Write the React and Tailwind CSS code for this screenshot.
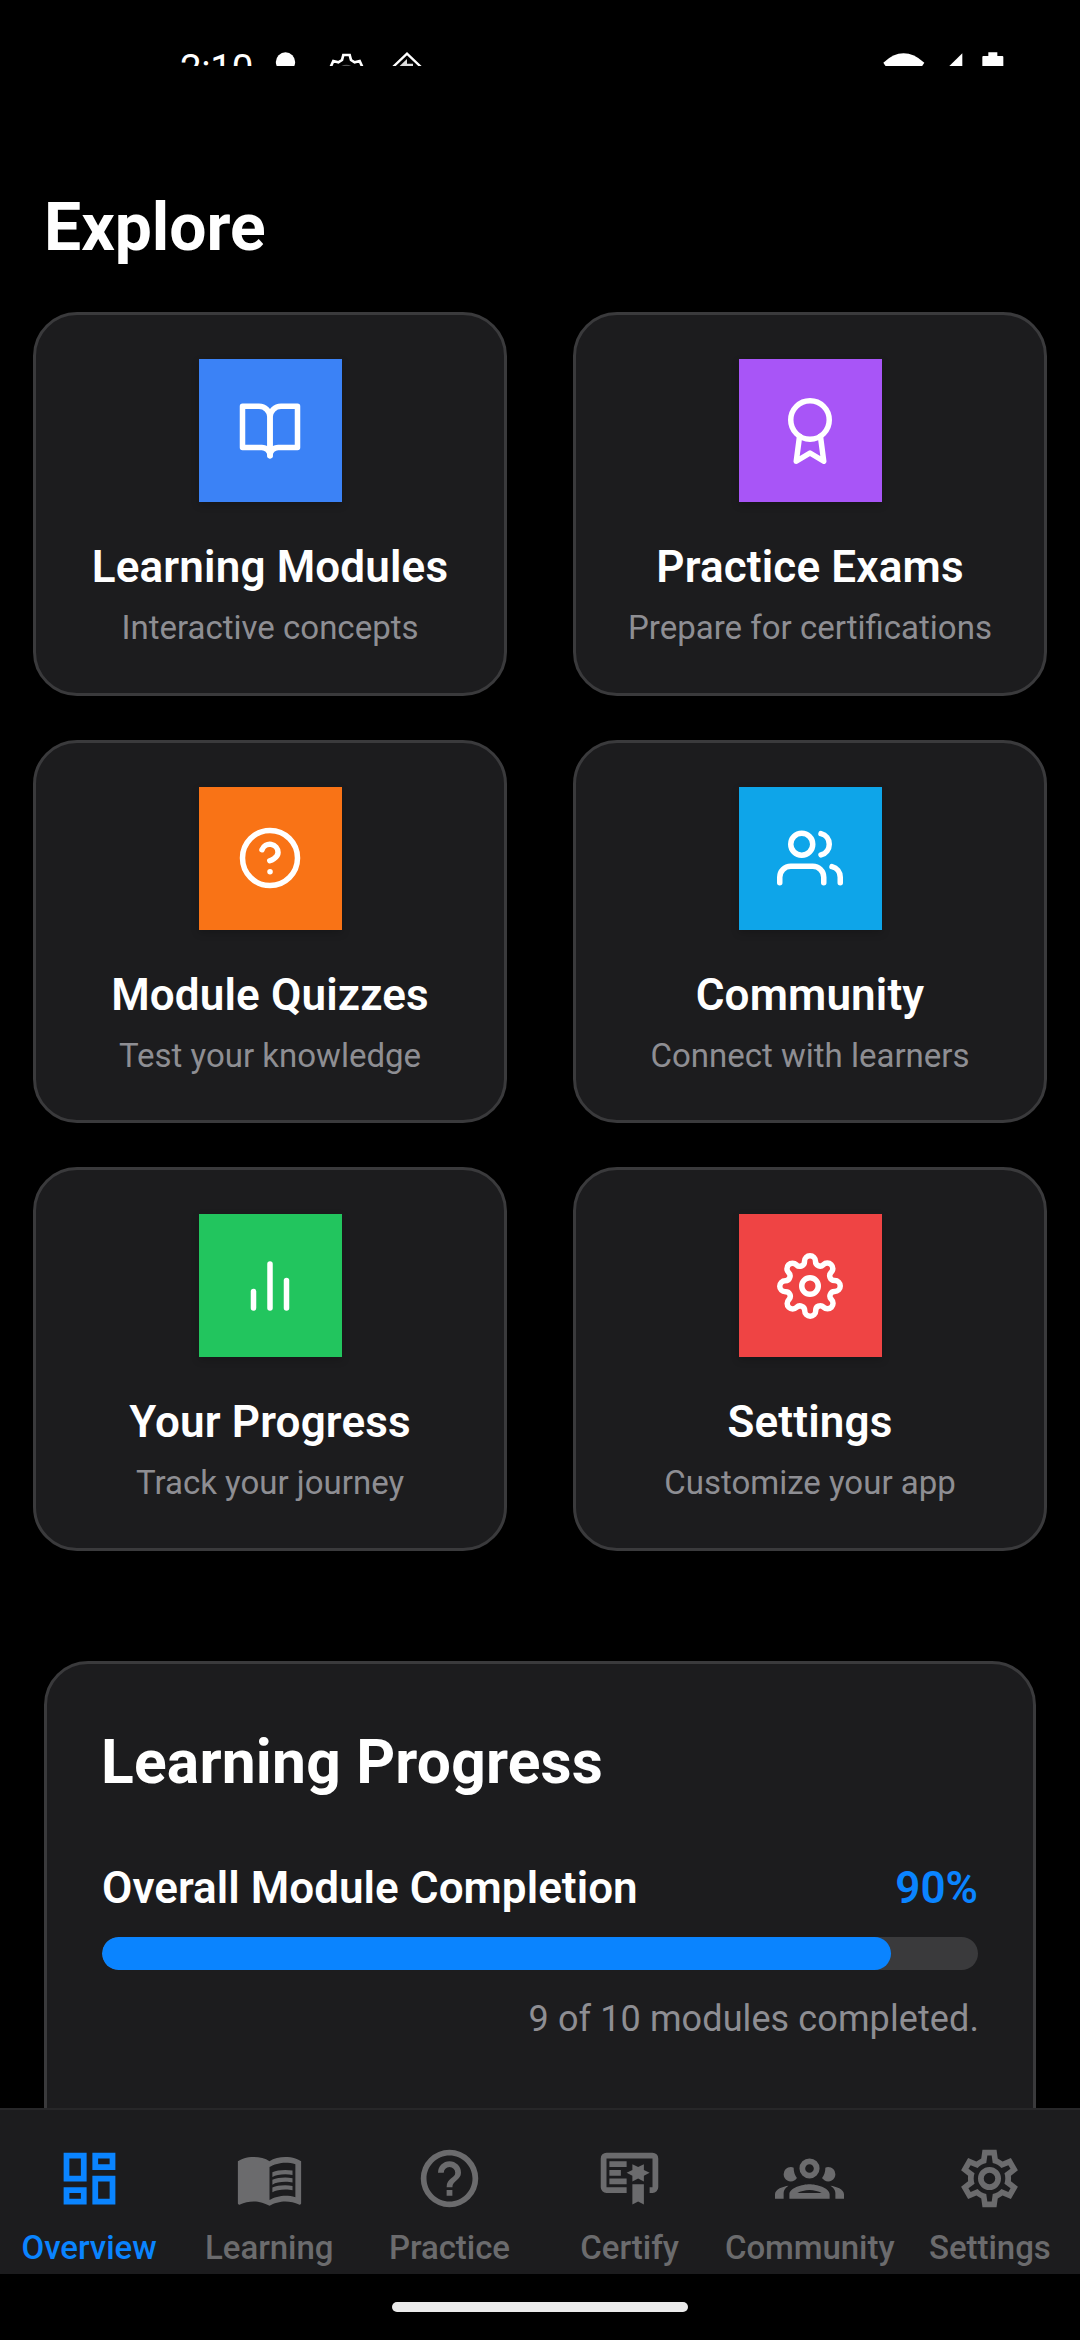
import { FiAward, FiBarChart2, FiBookOpen, FiHelpCircle, FiSettings, FiUsers } from "react-icons/fi";

const tiles = [
  { title: "Learning Modules", sub: "Interactive concepts", Icon: FiBookOpen, color: "bg-[#3b82f6]" },
  { title: "Practice Exams", sub: "Prepare for certifications", Icon: FiAward, color: "bg-[#a855f7]" },
  { title: "Module Quizzes", sub: "Test your knowledge", Icon: FiHelpCircle, color: "bg-[#f97316]" },
  { title: "Community", sub: "Connect with learners", Icon: FiUsers, color: "bg-[#0ea5e9]" },
  { title: "Your Progress", sub: "Track your journey", Icon: FiBarChart2, color: "bg-[#22c55e]" },
  { title: "Settings", sub: "Customize your app", Icon: FiSettings, color: "bg-[#ef4444]" },
];

const tabs = [
  {
    label: "Overview",
    active: true,
    d: "M19,5V7H15V5H19M9,5V11H5V5H9M19,13V19H15V13H19M9,17V19H5V17H9M21,3H13V9H21V3M11,3H3V13H11V3M21,11H13V21H21V11M11,15H3V21H11V15Z",
  },
  {
    label: "Learning",
    d: "M12 21.5C10.65 20.65 8.2 20 6.5 20C4.85 20 3.15 20.3 1.75 21.05C1.65 21.1 1.6 21.1 1.5 21.1C1.25 21.1 1 20.85 1 20.6V6C1.6 5.55 2.25 5.25 3 5C4.11 4.65 5.33 4.5 6.5 4.5C8.45 4.5 10.55 4.9 12 6C13.45 4.9 15.55 4.5 17.5 4.5C18.67 4.5 19.89 4.65 21 5C21.75 5.25 22.4 5.55 23 6V20.6C23 20.85 22.75 21.1 22.5 21.1C22.4 21.1 22.35 21.1 22.25 21.05C20.85 20.3 19.15 20 17.5 20C15.8 20 13.35 20.65 12 21.5M12 8V19.5C13.35 18.65 15.8 18 17.5 18C18.7 18 19.9 18.15 21 18.5V7C19.9 6.65 18.7 6.5 17.5 6.5C15.8 6.5 13.35 7.15 12 8M13 11.5C14.11 10.82 15.6 10.5 17.5 10.5C18.41 10.5 19.26 10.59 20 10.78V9.23C19.13 9.08 18.29 9 17.5 9C15.73 9 14.23 9.28 13 9.84V11.5M17.5 11.67C15.79 11.67 14.29 11.93 13 12.46V14.15C14.11 13.5 15.6 13.16 17.5 13.16C18.54 13.16 19.38 13.23 20 13.4V11.9C19.13 11.74 18.29 11.67 17.5 11.67M20 14.57C19.13 14.41 18.29 14.33 17.5 14.33C15.67 14.33 14.17 14.6 13 15.13V16.82C14.11 16.16 15.6 15.83 17.5 15.83C18.54 15.83 19.38 15.91 20 16.08V14.57Z",
  },
  {
    label: "Practice",
    d: "M11,18H13V16H11V18M12,2A10,10 0 0,0 2,12A10,10 0 0,0 12,22A10,10 0 0,0 22,12A10,10 0 0,0 12,2M12,20C7.59,20 4,16.41 4,12C4,7.59 7.59,4 12,4C16.41,4 20,7.59 20,12C20,16.41 16.41,20 12,20M12,6A4,4 0 0,0 8,10H10A2,2 0 0,1 12,8A2,2 0 0,1 14,10C14,12 11,11.75 11,15H13C13,12.75 16,12.5 16,10A4,4 0 0,0 12,6Z",
  },
  {
    label: "Certify",
    d: "M13 21L15 20L17 21V14H13M17 9V7L15 8L13 7V9L11 10L13 11V13L15 12L17 13V11L19 10M20 3H4A2 2 0 0 0 2 5V15A2 2 0 0 0 4 17H11V15H4V5H20V15H19V17H20A2 2 0 0 0 22 15V5A2 2 0 0 0 20 3M11 8H5V6H11M9 11H5V9H9M11 14H5V12H11Z",
  },
  {
    label: "Community",
    d: "M12,5A3.5,3.5 0 0,0 8.5,8.5A3.5,3.5 0 0,0 12,12A3.5,3.5 0 0,0 15.5,8.5A3.5,3.5 0 0,0 12,5M12,7A1.5,1.5 0 0,1 13.5,8.5A1.5,1.5 0 0,1 12,10A1.5,1.5 0 0,1 10.5,8.5A1.5,1.5 0 0,1 12,7M5.5,8A2.5,2.5 0 0,0 3,10.5C3,11.44 3.53,12.25 4.29,12.68C4.65,12.88 5.06,13 5.5,13C5.94,13 6.35,12.88 6.71,12.68C7.08,12.47 7.39,12.17 7.62,11.81C6.89,10.86 6.5,9.7 6.5,8.5C6.5,8.41 6.5,8.31 6.5,8.22C6.2,8.08 5.86,8 5.5,8M18.5,8C18.14,8 17.8,8.08 17.5,8.22C17.5,8.31 17.5,8.41 17.5,8.5C17.5,9.7 17.11,10.86 16.38,11.81C16.5,12 16.63,12.15 16.78,12.3C16.94,12.45 17.1,12.58 17.29,12.68C17.65,12.88 18.06,13 18.5,13C18.94,13 19.35,12.88 19.71,12.68C20.47,12.25 21,11.44 21,10.5A2.5,2.5 0 0,0 18.5,8M12,14C9.66,14 5,15.17 5,17.5V19H19V17.5C19,15.17 14.34,14 12,14M4.71,14.55C2.78,14.78 0,15.76 0,17.5V19H3V17.07C3,16.06 3.69,15.22 4.71,14.55M19.29,14.55C20.31,15.22 21,16.06 21,17.07V19H24V17.5C24,15.76 21.22,14.78 19.29,14.55M12,16C13.53,16 15.24,16.5 16.23,17H7.77C8.76,16.5 10.47,16 12,16Z",
  },
  {
    label: "Settings",
    d: "M9.55 2H14.45L14.87 5.07L16.56 6.05L19.44 4.89L21.88 9.11L19.45 11.03L19.5 12L19.45 12.97L21.88 14.89L19.44 19.11L16.56 17.95L14.87 18.93L14.45 22H9.55L9.13 18.93L7.44 17.95L4.56 19.11L2.12 14.89L4.55 12.97L4.5 12L4.55 11.03L2.12 9.11L4.56 4.89L7.44 6.05L9.13 5.07ZM11.25 4L10.88 6.61C9.68 6.86 8.62 7.5 7.85 8.39L5.44 7.35L4.69 8.65L6.8 10.2C6.4 11.37 6.4 12.64 6.8 13.8L4.68 15.36L5.43 16.66L7.86 15.62C8.63 16.5 9.68 17.14 10.87 17.38L11.24 20H12.76L13.13 17.39C14.32 17.14 15.37 16.5 16.14 15.62L18.57 16.66L19.32 15.36L17.2 13.81C17.6 12.64 17.6 11.37 17.2 10.2L19.31 8.65L18.56 7.35L16.15 8.39C15.38 7.5 14.32 6.86 13.12 6.62L12.75 4ZM12 8A4 4 0 0 1 16 12A4 4 0 0 1 12 16A4 4 0 0 1 8 12A4 4 0 0 1 12 8ZM12 10A2 2 0 0 0 10 12A2 2 0 0 0 12 14A2 2 0 0 0 14 12A2 2 0 0 0 12 10Z",
  },
];

function StatusBar() {
  return (
    <div className="flex h-[66px] items-start justify-between overflow-hidden pl-[180px] pr-[76px] text-white">
      <div className="flex items-start">
        <span className="mt-[46px] w-[75px] text-[38.5px] leading-[46px] tracking-[-0.3px]">2:10</span>
        <svg className="mt-[51px] h-[20px] w-[180px]" viewBox="0 0 540 60" fill="none">
          <circle cx="91.5" cy="33" r="29" fill="#fff" />
          <path d="M226 50L235 30L250 34L261 27L265 12H284L288 27L299 34L314 30L323 50" stroke="#fff" strokeWidth="8" />
          <path d="M259 45Q274 38 289 45Z" fill="#555" />
          <path d="M413 49L456 8L499 49" stroke="#fff" strokeWidth="7" />
          <path d="M434 45L456 24V38H474V45Z" fill="#ddd" />
        </svg>
      </div>
      <svg className="mt-[52px] h-[20px] w-[121px]" viewBox="0 0 363 60">
        <path d="M1 32Q61 -24 124 32L115 46H10Z" fill="#fff" />
        <path d="M199 42L238 4V42Z" fill="#fff" />
        <path d="M316 1H343V12H358Q361 12 361 15V60H298V15Q298 12 301 12H316Z" fill="#fff" />
      </svg>
    </div>
  );
}

function Tile({ title, sub, Icon, color }) {
  return (
    <div className="flex h-[383.5px] flex-col items-center rounded-[44px] border-[3px] border-[#3a3a3c] bg-[#1c1c1e] pt-11">
      <div className={`flex size-[143px] shrink-0 items-center justify-center shadow-[0_3px_8px_rgba(0,0,0,0.2)] ${color}`}>
        <Icon className="size-[66px] text-white" />
      </div>
      <div className="mt-9 text-[44px] font-semibold leading-[58px] tracking-[0.15px] text-white">{title}</div>
      <div className="mt-[10px] text-[33px] leading-[44px] text-[#8e8e93]">{sub}</div>
    </div>
  );
}

function ProgressCard() {
  return (
    <section className="mx-[44px] mt-[110.5px] h-[600px] rounded-[44px] border-[3px] border-[#3a3a3c] bg-[#1c1c1e] px-[55px] pt-[63px]">
      <h2 className="-ml-px text-[60.5px] font-bold leading-[72px] tracking-[0.2px] text-white">Learning Progress</h2>
      <div className="mt-[60px] flex justify-between text-[44px] font-semibold leading-[58px]">
        <span className="tracking-[0.05px] text-white">Overall Module Completion</span>
        <span className="text-[#0a84ff]">90%</span>
      </div>
      <div className="mt-5 h-[33px] overflow-hidden rounded-full bg-[#3a3a3c]">
        <div className="h-full w-[90.1%] rounded-full bg-[#0a84ff]" />
      </div>
      <p className="-mr-px mt-[25px] text-right text-[36px] leading-[48px] tracking-[0.1px] text-[#8e8e93]">9 of 10 modules completed.</p>
    </section>
  );
}

export default function App() {
  return (
    <div className="flex h-[2340px] w-[1080px] flex-col overflow-hidden bg-black font-['Roboto',sans-serif]">
      <main className="h-[2108px] shrink-0 overflow-hidden">
        <StatusBar />
        <h1 className="ml-[44px] mt-[123px] text-[66px] font-bold leading-[78px] text-white">Explore</h1>
        <div className="mx-[33px] mt-[45px] grid grid-cols-2 gap-x-[66px] gap-y-11">
          {tiles.map((t) => (
            <Tile key={t.title} {...t} />
          ))}
        </div>
        <ProgressCard />
      </main>
      <nav className="h-[166px] shrink-0 border-t-2 border-[#272729] bg-[#1c1c1e] pt-[33.5px]">
        <div className="-ml-px grid grid-cols-6">
          {tabs.map(({ label, active, d }) => (
            <div key={label} className={`flex flex-col items-center ${active ? "text-[#0a84ff]" : "text-[#6b6b6d]"}`}>
              <svg className="size-[69px]" viewBox="0 0 24 24" fill="currentColor" fillRule={label === "Settings" ? "evenodd" : "nonzero"}>
                <path d={d} />
              </svg>
              <span className="mt-[13.5px] text-[33px] font-medium leading-[44px] tracking-[-0.05px]">{label}</span>
            </div>
          ))}
        </div>
      </nav>
      <div className="flex h-[66px] shrink-0 justify-center pt-7">
        <div className="h-[10px] w-[296px] rounded-full bg-[#ebebeb]" />
      </div>
    </div>
  );
}
